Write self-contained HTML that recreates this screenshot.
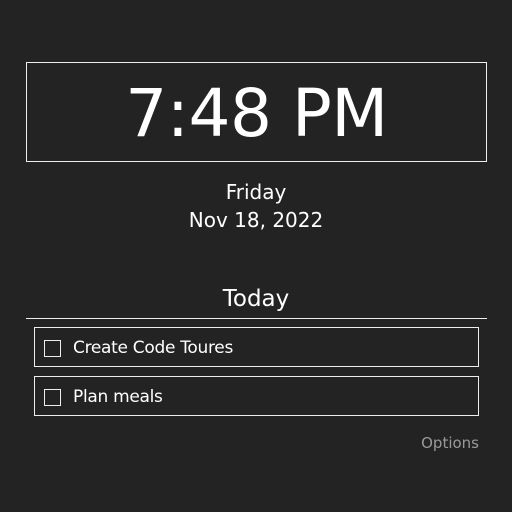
<!DOCTYPE html>
<html><head><style>
body{margin:0;width:512px;height:512px;background:#232323;color:#fff;font-family:"DejaVu Sans","Liberation Sans",sans-serif;position:relative;overflow:hidden}
.a{position:absolute}
.clock{left:26px;top:62px;width:459px;height:98px;border:1px solid #eee;text-align:center;font-size:66px;line-height:102px;letter-spacing:-0.5px}
.c{left:0;width:512px;text-align:center}
.task{left:34px;width:443px;height:38px;border:1px solid #eee}
.box{left:9px;top:12px;width:15px;height:15px;border:1px solid #eee}
.t{left:38px;top:1px;line-height:38px;font-size:17px;letter-spacing:-0.3px}
</style></head><body>
<div class="a clock">7:48 PM</div>
<div class="a c" style="top:178px;font-size:20px;line-height:28px">Friday</div>
<div class="a c" style="top:206px;font-size:20px;line-height:28px">Nov 18, 2022</div>
<div class="a c" style="top:283px;font-size:23px;line-height:32px">Today</div>
<div class="a" style="left:26px;top:318px;width:461px;height:1px;background:#eee"></div>
<div class="a task" style="top:327px"><div class="a box"></div><div class="a t">Create Code Toures</div></div>
<div class="a task" style="top:376px"><div class="a box"></div><div class="a t">Plan meals</div></div>
<div class="a" style="right:33px;top:433px;font-size:15px;line-height:20px;color:#9a9a9a">Options</div>
</body></html>
